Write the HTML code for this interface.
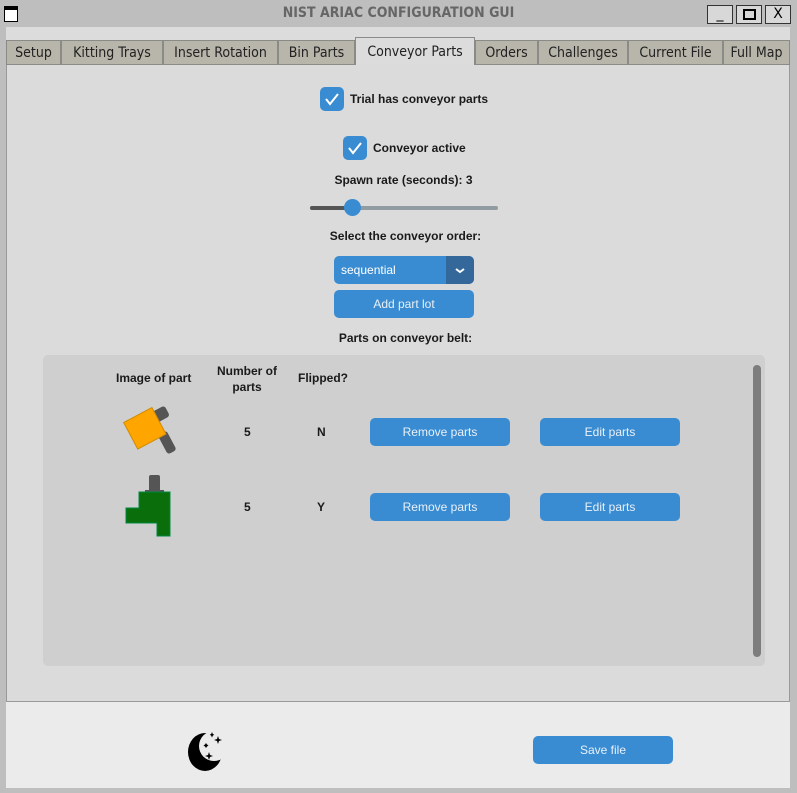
<!DOCTYPE html>
<html><head><style>
*{margin:0;padding:0;box-sizing:border-box}
body{width:797px;height:793px;background:#bebebe;font-family:"DejaVu Sans","Liberation Sans",sans-serif;position:relative;overflow:hidden}
.a{position:absolute}
.t{font-size:12px;color:#1a1a1a;font-weight:bold;font-family:"Liberation Sans",sans-serif}
.btn{position:absolute;background:#3a8cd2;color:#e8f0f8;border-radius:5px;font-size:12px;font-family:"Liberation Sans",sans-serif;display:flex;align-items:center;justify-content:center}
.cb{position:absolute;width:24px;height:24px;background:#3a8cd2;border-radius:5px}
.tab{position:absolute;top:40px;height:25px;background:#b8b5aa;border:1px solid #8a8a86;font-size:14px;color:#222;display:flex;align-items:center;justify-content:center;font-family:"DejaVu Sans Condensed","DejaVu Sans",sans-serif}
</style></head><body>
<div class="a" style="left:0;top:0;width:797px;height:27px;background:#bebebe"></div>
<div class="a" style="left:4px;top:6px;width:14px;height:16px;background:#fff;border:1px solid #000;border-top:4px solid #000"></div>
<div class="a" style="left:0;top:5px;width:797px;text-align:center;font-size:14px;font-weight:bold;color:#666;font-family:'DejaVu Sans Condensed','DejaVu Sans',sans-serif">NIST ARIAC CONFIGURATION GUI</div>
<div class="a" style="left:707px;top:5px;width:26px;height:19px;border:1px solid #333;background:#d8d8d8;font-size:14px;text-align:center;line-height:16px">_</div>
<div class="a" style="left:736px;top:5px;width:26px;height:19px;border:1px solid #333;background:#d8d8d8"><div style="margin:3px 6px;width:13px;height:11px;border:2px solid #000"></div></div>
<div class="a" style="left:765px;top:5px;width:26px;height:19px;border:1px solid #333;background:#d8d8d8;font-size:14px;text-align:center;line-height:17px">X</div>
<div class="a" style="left:6px;top:27px;width:784px;height:13px;background:#dcdcdc"></div>
<div class="a" style="left:6px;top:40px;width:784px;height:25px;background:#dcdcdc"></div>
<div class="tab" style="left:6px;width:55px">Setup</div>
<div class="tab" style="left:61px;width:102px">Kitting Trays</div>
<div class="tab" style="left:163px;width:115px">Insert Rotation</div>
<div class="tab" style="left:278px;width:77px">Bin Parts</div>
<div class="tab" style="left:355px;top:37px;height:29px;width:120px;background:#dcdcdc;border-bottom:none">Conveyor Parts</div>
<div class="tab" style="left:475px;width:63px">Orders</div>
<div class="tab" style="left:538px;width:90px">Challenges</div>
<div class="tab" style="left:628px;width:95px">Current File</div>
<div class="tab" style="left:723px;width:67px">Full Map</div>
<div class="a" style="left:6px;top:65px;width:784px;height:637px;background:#dbdbdb;border:1px solid #999;border-top:none"></div>
<div class="a" style="left:6px;top:702px;width:784px;height:86px;background:#ebebeb"></div>

<div class="cb" style="left:320px;top:87px"><svg width="24" height="24"><path d="M6 12l4 5 8-10" stroke="#fff" stroke-width="2" fill="none"/></svg></div>
<div class="a t" style="left:350px;top:92px">Trial has conveyor parts</div>
<div class="cb" style="left:343px;top:136px"><svg width="24" height="24"><path d="M6 12l4 5 8-10" stroke="#fff" stroke-width="2" fill="none"/></svg></div>
<div class="a t" style="left:373px;top:141px">Conveyor active</div>
<div class="a t" style="left:0;width:797px;text-align:center;top:173px;left:5px">Spawn rate (seconds): 3</div>
<div class="a" style="left:310px;top:206px;width:188px;height:4px;border-radius:2px;background:#919ba2"></div>
<div class="a" style="left:310px;top:206px;width:42px;height:4px;border-radius:2px;background:#555"></div>
<div class="a" style="left:344px;top:199px;width:17px;height:17px;border-radius:50%;background:#3a8cd2"></div>
<div class="a t" style="left:0;width:797px;text-align:center;top:229px;left:7px">Select the conveyor order:</div>
<div class="btn" style="left:334px;top:256px;width:140px;height:28px;justify-content:flex-start;padding-left:7px;color:#fff">sequential</div>
<div class="a" style="left:446px;top:256px;width:28px;height:28px;background:#35689a;border-radius:0 5px 5px 0"><svg width="28" height="28"><path d="M10 13l4 3 4-3" stroke="#fff" stroke-width="2" fill="none"/></svg></div>
<div class="btn" style="left:334px;top:290px;width:140px;height:28px">Add part lot</div>
<div class="a t" style="left:0;width:797px;text-align:center;top:331px;left:7px">Parts on conveyor belt:</div>

<div class="a" style="left:43px;top:355px;width:722px;height:311px;background:#cfcfcf;border-radius:5px"></div>
<div class="a" style="left:753px;top:365px;width:8px;height:292px;background:#7d7d7d;border-radius:4px"></div>
<div class="a t" style="left:116px;top:371px">Image of part</div>
<div class="a t" style="left:210px;top:363px;width:74px;text-align:center;line-height:16px">Number of parts</div>
<div class="a t" style="left:298px;top:371px">Flipped?</div>
<svg class="a" style="left:100px;top:390px" width="100" height="80">
<g transform="rotate(-28 48 40)">
<rect x="60" y="26" width="14" height="12" rx="3" fill="#555"/>
<rect x="54" y="49" width="10" height="22" rx="3" fill="#555"/>
<rect x="30" y="22" width="32" height="30" fill="#ffa500" stroke="#d08a00"/>
</g></svg>
<div class="a t" style="left:244px;top:425px">5</div>
<div class="a t" style="left:317px;top:425px">N</div>
<div class="btn" style="left:370px;top:418px;width:140px;height:28px">Remove parts</div>
<div class="btn" style="left:540px;top:418px;width:140px;height:28px">Edit parts</div>
<svg class="a" style="left:120px;top:470px" width="60" height="70">
<rect x="29" y="5" width="11" height="18" rx="2" fill="#555"/><rect x="25" y="20" width="19" height="4" fill="#555"/>
<path d="M19 22H50V66H37V53H6V38H19Z" fill="#0a6e0a" stroke="#084"/></svg>
<div class="a t" style="left:244px;top:500px">5</div>
<div class="a t" style="left:317px;top:500px">Y</div>
<div class="btn" style="left:370px;top:493px;width:140px;height:28px">Remove parts</div>
<div class="btn" style="left:540px;top:493px;width:140px;height:28px">Edit parts</div>

<svg class="a" style="left:185px;top:732px" width="42" height="40">
<defs><mask id="m"><rect width="42" height="40" fill="#fff"/><circle cx="29" cy="14" r="15" fill="#000"/></mask></defs>
<ellipse cx="20" cy="20" rx="17" ry="19" fill="#000" mask="url(#m)"/>
<path d="M24 20l1 3 3 1-3 1-1 3-1-3-3-1 3-1z M33 4l1 3 3 1-3 1-1 3-1-3-3-1 3-1z M21 11l1 1.5 1.5 1-1.5 1-1 1.5-1-1.5-1.5-1 1.5-1z M27 0l.8 2 1.5.8-1.5.8-.8 2-.8-2-1.5-.8 1.5-.8z" fill="#000"/></svg>
<div class="btn" style="left:533px;top:736px;width:140px;height:28px">Save file</div>
</body></html>
